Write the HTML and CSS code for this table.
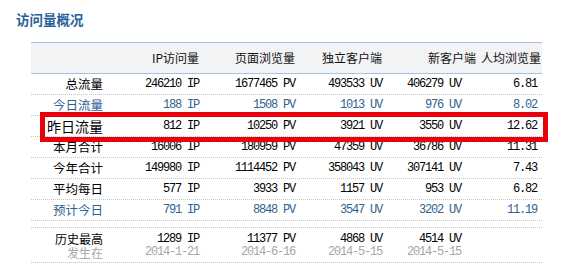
FILE: index.html
```html
<!DOCTYPE html>
<html lang="zh">
<head>
<meta charset="utf-8">
<title>访问量概况</title>
<link rel="stylesheet" href="styles.css">
</head>
<body>
<div class="page">
  <h2 class="title">访问量概况</h2>
  <div class="stats">
    <div class="row head">
      <span class="cell"></span>
      <span class="cell">IP访问量</span>
      <span class="cell">页面浏览量</span>
      <span class="cell">独立客户端</span>
      <span class="cell">新客户端</span>
      <span class="cell">人均浏览量</span>
    </div>
    <div class="row">
      <span class="cell lbl">总流量</span>
      <span class="cell num">246210 IP</span>
      <span class="cell num">1677465 PV</span>
      <span class="cell num">493533 UV</span>
      <span class="cell num nw">406279 UV</span>
      <span class="cell num">6.81</span>
    </div>
    <div class="row blue">
      <span class="cell lbl">今日流量</span>
      <span class="cell num">188 IP</span>
      <span class="cell num">1508 PV</span>
      <span class="cell num">1013 UV</span>
      <span class="cell num nw">976 UV</span>
      <span class="cell num">8.02</span>
    </div>
    <div class="row">
      <span class="cell lbl big">昨日流量</span>
      <span class="cell num">812 IP</span>
      <span class="cell num">10250 PV</span>
      <span class="cell num">3921 UV</span>
      <span class="cell num nw">3550 UV</span>
      <span class="cell num">12.62</span>
    </div>
    <div class="row">
      <span class="cell lbl">本月合计</span>
      <span class="cell num">16006 IP</span>
      <span class="cell num">180959 PV</span>
      <span class="cell num">47359 UV</span>
      <span class="cell num nw">36786 UV</span>
      <span class="cell num">11.31</span>
    </div>
    <div class="row">
      <span class="cell lbl">今年合计</span>
      <span class="cell num">149980 IP</span>
      <span class="cell num">1114452 PV</span>
      <span class="cell num">358043 UV</span>
      <span class="cell num nw">307141 UV</span>
      <span class="cell num">7.43</span>
    </div>
    <div class="row">
      <span class="cell lbl">平均每日</span>
      <span class="cell num">577 IP</span>
      <span class="cell num">3933 PV</span>
      <span class="cell num">1157 UV</span>
      <span class="cell num nw">953 UV</span>
      <span class="cell num">6.82</span>
    </div>
    <div class="row blue">
      <span class="cell lbl">预计今日</span>
      <span class="cell num">791 IP</span>
      <span class="cell num">8848 PV</span>
      <span class="cell num">3547 UV</span>
      <span class="cell num nw">3202 UV</span>
      <span class="cell num">11.19</span>
    </div>
    <div class="row spacer"></div>
    <div class="row hist">
      <div class="cell lbl"><div class="top">历史最高</div><div class="sub">发生在</div></div>
      <div class="cell num"><div class="top">1289 IP</div><div class="sub">2014-1-21</div></div>
      <div class="cell num"><div class="top">11377 PV</div><div class="sub">2014-6-16</div></div>
      <div class="cell num"><div class="top">4868 UV</div><div class="sub">2014-5-15</div></div>
      <div class="cell num nw"><div class="top">4514 UV</div><div class="sub">2014-5-15</div></div>
      <div class="cell"></div>
    </div>
    <div class="highlight"></div>
  </div>
</div>
</body>
</html>
```

FILE: styles.css
```css
html, body {
  margin: 0;
  padding: 0;
  background: #ffffff;
}

body {
  font-family: "Noto Sans CJK SC", "Noto Sans", sans-serif;
  color: #111111;
}

.page {
  width: 576px;
}

.title {
  margin: 0;
  padding: 11px 0 0 16px;
  height: 16px;
  line-height: 16px;
  font-size: 13.5px;
  font-weight: bold;
  color: #27619c;
}

.stats {
  position: relative;
  margin: 15px 0 0 31px;
  width: 511px;
}

.row {
  display: grid;
  grid-template-columns: 77px 96px 96px 87px 94px 61px;
  align-items: center;
  height: 20px;
  border-bottom: 1px dotted #c4c4c4;
}

.cell {
  text-align: right;
  padding-right: 5px;
  white-space: nowrap;
}

.head {
  height: 30px;
  background: #f2f3f5;
  border-top: 1px solid #a9c1d9;
  border-bottom: 1px solid #a9c1d9;
  font-size: 12px;
  line-height: 14px;
  color: #111111;
}

.lbl {
  font-size: 12.5px;
  line-height: 20px;
  color: #000000;
}

.lbl.big {
  font-size: 14px;
}

.num {
  font-family: "Liberation Mono", "DejaVu Sans Mono", monospace;
  font-size: 12px;
  letter-spacing: -1.2px;
  line-height: 20px;
  color: #000000;
}

.nw {
  padding-right: 20px;
}

.blue .lbl,
.blue .num {
  color: #2f6290;
}

.spacer {
  height: 6px;
}

.hist {
  height: 34px;
  align-items: start;
}

.hist .cell {
  padding-top: 4px;
}

.hist .lbl {
  font-size: 12px;
}

.hist .top {
  line-height: 14px;
}

.hist .sub {
  line-height: 13px;
  color: #a6a6a6;
}

.highlight {
  position: absolute;
  left: 9px;
  top: 70px;
  width: 498px;
  height: 20px;
  border: 5px solid #e8000b;
}
```
